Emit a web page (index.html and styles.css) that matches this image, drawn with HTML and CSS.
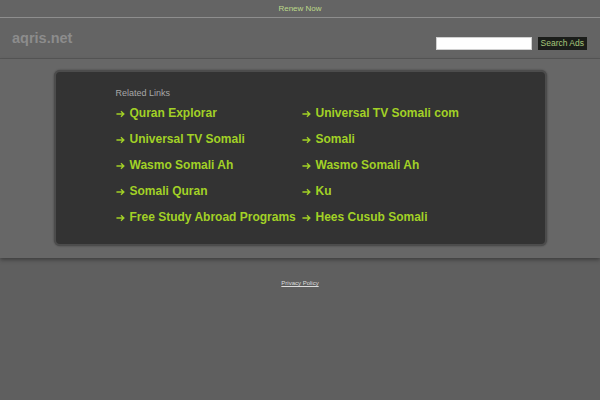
FILE: index.html
```html
<!DOCTYPE html>
<html>
<head>
<meta charset="utf-8">
<link rel="stylesheet" href="styles.css">
</head>
<body>
<div class="topbar"><a href="#" class="renew">Renew Now</a></div>
<div class="header">
  <div class="logo">aqris.net</div>
  <form class="search">
    <input type="text" class="search-input">
    <button type="button" class="search-btn">Search Ads</button>
  </form>
</div>
<div class="main">
  <div class="box">
    <div class="related">Related Links</div>
    <div class="links">
      <a href="#" class="link"><svg class="arr" viewBox="0 0 10 8"><path d="M0.5 4H8.5M5.5 1L8.7 4L5.5 7"/></svg>Quran Explorar</a>
      <a href="#" class="link"><svg class="arr" viewBox="0 0 10 8"><path d="M0.5 4H8.5M5.5 1L8.7 4L5.5 7"/></svg>Universal TV Somali com</a>
      <a href="#" class="link"><svg class="arr" viewBox="0 0 10 8"><path d="M0.5 4H8.5M5.5 1L8.7 4L5.5 7"/></svg>Universal TV Somali</a>
      <a href="#" class="link"><svg class="arr" viewBox="0 0 10 8"><path d="M0.5 4H8.5M5.5 1L8.7 4L5.5 7"/></svg>Somali</a>
      <a href="#" class="link"><svg class="arr" viewBox="0 0 10 8"><path d="M0.5 4H8.5M5.5 1L8.7 4L5.5 7"/></svg>Wasmo Somali Ah</a>
      <a href="#" class="link"><svg class="arr" viewBox="0 0 10 8"><path d="M0.5 4H8.5M5.5 1L8.7 4L5.5 7"/></svg>Wasmo Somali Ah</a>
      <a href="#" class="link"><svg class="arr" viewBox="0 0 10 8"><path d="M0.5 4H8.5M5.5 1L8.7 4L5.5 7"/></svg>Somali Quran</a>
      <a href="#" class="link"><svg class="arr" viewBox="0 0 10 8"><path d="M0.5 4H8.5M5.5 1L8.7 4L5.5 7"/></svg>Ku</a>
      <a href="#" class="link"><svg class="arr" viewBox="0 0 10 8"><path d="M0.5 4H8.5M5.5 1L8.7 4L5.5 7"/></svg>Free Study Abroad Programs</a>
      <a href="#" class="link"><svg class="arr" viewBox="0 0 10 8"><path d="M0.5 4H8.5M5.5 1L8.7 4L5.5 7"/></svg>Hees Cusub Somali</a>
    </div>
  </div>
</div>
<div class="footer"><a href="#" class="privacy">Privacy Policy</a></div>
</body>
</html>
```
FILE: styles.css
```css
html, body {
  margin: 0;
  padding: 0;
}
body {
  background: #5f5f5f;
  font-family: "Liberation Sans", Arial, sans-serif;
  height: 400px;
  overflow: hidden;
}
.topbar {
  height: 17px;
  background: #646464;
  border-bottom: 1px solid #8e8e8e;
  display: flex;
  justify-content: center;
  align-items: center;
}
.renew {
  color: #bcd98a;
  font-size: 8px;
  text-decoration: none;
}
.header {
  height: 40px;
  background: #646464;
  border-bottom: 1px solid #575757;
  display: flex;
  justify-content: space-between;
  align-items: flex-start;
  padding: 0 13px 0 12px;
}
.logo {
  color: #8c8c8c;
  font-weight: bold;
  font-size: 14.5px;
  margin-top: 12px;
}
.search {
  display: flex;
  align-items: center;
  gap: 6px;
  margin: 19px 0 0 0;
}
.search-input {
  width: 94px;
  height: 11px;
  border: 1px solid #d0d0d0;
  background: #fff;
  padding: 0;
  margin: 0;
}
.search-btn {
  background: #1b1d1a;
  color: #a8c87a;
  border: none;
  font-family: "Liberation Sans", Arial, sans-serif;
  font-size: 8.5px;
  height: 13px;
  padding: 0 3px;
  margin: 0;
  line-height: 13px;
}
.main {
  height: 199px;
  background: #676767;
  padding-top: 11px;
  box-sizing: border-box;
  box-shadow: 0 2px 4px rgba(0,0,0,0.35);
  position: relative;
}
.box {
  width: 493px;
  height: 176px;
  margin: 0 auto;
  background: #333333;
  border: 2px solid #4c4c4c;
  border-radius: 6px;
  box-shadow: 0 0 2px rgba(0,0,0,0.4);
  padding: 15px 0 0 60px;
  box-sizing: border-box;
}
.related {
  color: #a8a8a8;
  font-size: 9px;
  line-height: 12px;
}
.links {
  display: grid;
  grid-template-columns: 186px auto;
  grid-auto-rows: 26px;
  margin-top: 1px;
}
.link {
  color: #a2d126;
  font-weight: bold;
  font-size: 12px;
  text-decoration: none;
  line-height: 16px;
  white-space: nowrap;
  display: flex;
  align-items: center;
}
.arr {
  width: 9px;
  height: 8px;
  margin: 1px 5px 0 0;
  fill: none;
  stroke: #a2d126;
  stroke-width: 1.5;
  flex: none;
}
.footer {
  text-align: center;
  padding-top: 13px;
}
.privacy {
  color: #dcdcdc;
  font-size: 6px;
}
```
